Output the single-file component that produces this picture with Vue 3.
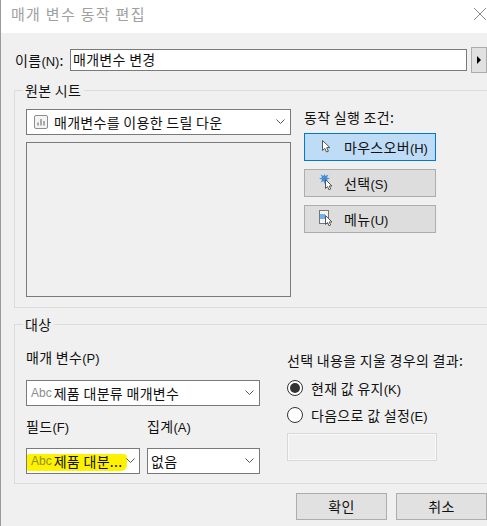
<template>
  <div class="dialog">
    <header class="titlebar">
      <span class="title">매개 변수 동작 편집</span>
      <svg class="close" width="14" height="14" viewBox="0 0 14 14">
        <path d="M1 1 13 13M13 1 1 13" stroke="#8a8a8a" stroke-width="1" fill="none" />
      </svg>
    </header>

    <main class="body">
      <div class="name-row">
        <label class="name-label">이름<span class="mn">(N)</span>:</label>
        <div class="name-input">매개변수 변경</div>
        <button class="arrow-btn"><span class="tri"></span></button>
      </div>

      <fieldset class="group source">
        <legend>원본 시트</legend>
        <div class="source-cols">
          <div class="source-left">
            <div class="combo">
              <svg class="sheet-icon" width="14" height="14" viewBox="0 0 14 14">
                <rect x="0.5" y="0.5" width="13" height="13" rx="1.5" fill="#f4f4f4" stroke="#8c8c8c" />
                <path d="M4 7.5v3M7 4v6.5M10 6v4.5" stroke="#777" stroke-width="1.2" fill="none" />
              </svg>
              <span class="combo-text">매개변수를 이용한 드릴 다운</span>
              <svg class="chev" width="9" height="6" viewBox="0 0 9 6"><path d="M.5.5 4.5 4.500 8.500.5" /></svg>
            </div>
            <div class="sheet-list"></div>
          </div>
          <div class="source-right">
            <div class="run-label">동작 실행 조건:</div>
            <button
              v-for="t in triggers"
              :key="t.label"
              class="trigger"
              :class="{ active: t.active }"
            >
              <svg class="trigger-icon" width="18" height="18" viewBox="0 0 18 18">
                <polygon
                  v-if="t.kind === 'select'"
                  points="5.500,0 6.500,2.100 9.400,.6 7.900,3.500 11,4.500 7.900,5.500 9.400,8.400 6.500,6.900 5.500,10 4.500,6.900 1.600,8.400 3.100,5.500 0,4.500 3.100,3.500 1.600,.6 4.500,2.100"
                  fill="#3f8fe0"
                />
                <g v-if="t.kind === 'menu'">
                  <rect x="0.5" y="0.5" width="9" height="13" fill="#f4f4f4" stroke="#777" />
                  <rect x="1" y="4" width="5" height="5" fill="#6db2ee" />
                </g>
                <path
                  :d="t.kind === 'hover'
                    ? 'M3.500 2.500v10l2.300-2.200 1.700 3.700 1.900-.8-1.700-3.600h3.200z'
                    : 'M6.500 5.500v9l2-2 1.500 3.300 1.700-.8-1.500-3h2.800z'"
                  fill="#fff"
                  stroke="#555"
                  stroke-width="1"
                  stroke-linejoin="round"
                />
              </svg>
              <span class="trigger-text">{{ t.label }}<span class="mn">({{ t.key }})</span></span>
            </button>
          </div>
        </div>
      </fieldset>

      <fieldset class="group target">
        <legend>대상</legend>
        <div class="target-cols">
          <div class="target-left">
            <div class="field-label first">매개 변수<span class="mn">(P)</span></div>
            <div class="combo">
              <span class="abc">Abc</span>
              <span class="combo-text">제품 대분류 매개변수</span>
              <svg class="chev" width="9" height="6" viewBox="0 0 9 6"><path d="M.5.5 4.5 4.500 8.500.5" /></svg>
            </div>
            <div class="two">
              <div class="col-field">
                <div class="field-label">필드<span class="mn">(F)</span></div>
                <div class="combo">
                  <span class="marker"></span>
                  <span class="abc">Abc</span>
                  <span class="combo-text">제품 대분...</span>
                  <svg class="chev" width="9" height="6" viewBox="0 0 9 6"><path d="M.5.5 4.5 4.500 8.500.5" /></svg>
                </div>
              </div>
              <div class="col-agg">
                <div class="field-label">집계<span class="mn">(A)</span></div>
                <div class="combo plain">
                  <span class="combo-text">없음</span>
                  <svg class="chev" width="9" height="6" viewBox="0 0 9 6"><path d="M.5.5 4.5 4.500 8.500.5" /></svg>
                </div>
              </div>
            </div>
          </div>
          <div class="target-right">
            <div class="clear-label">선택 내용을 지울 경우의 결과:</div>
            <div class="radio-row">
              <span class="radio on"></span>
              <span>현재 값 유지<span class="mn">(K)</span></span>
            </div>
            <div class="radio-row">
              <span class="radio"></span>
              <span>다음으로 값 설정<span class="mn">(E)</span></span>
            </div>
            <div class="value-box"></div>
          </div>
        </div>
      </fieldset>

      <footer class="footer">
        <button class="foot-btn">확인</button>
        <button class="foot-btn">취소</button>
      </footer>
    </main>
  </div>
</template>

<script setup>
const triggers = [
  { label: '마우스오버', key: 'H', kind: 'hover', active: true },
  { label: '선택', key: 'S', kind: 'select', active: false },
  { label: '메뉴', key: 'U', kind: 'menu', active: false },
]
</script>

<style>
html,
body {
  margin: 0;
  background: #f0f0f0;
}
</style>

<style scoped>
.dialog {
  width: 487px;
  height: 526px;
  overflow: hidden;
  box-sizing: border-box;
  border-left: 1px solid #9a9a9a;
  font-family: "Noto Sans CJK KR", "Liberation Sans", sans-serif;
  font-size: 14px;
  letter-spacing: 0.3px;
  color: #111;
  background: #f0f0f0;
}
.titlebar {
  height: 33px;
  box-sizing: border-box;
  padding: 0 0 6px 10px;
  background: #fff;
  display: flex;
  align-items: center;
  justify-content: space-between;
}
.title {
  font-size: 15px;
  letter-spacing: 1.3px;
  color: #a0a0a0;
}
.close {
  margin-right: 0;
}
.body {
  display: flex;
  flex-direction: column;
}
.mn {
  font-family: "Liberation Sans", sans-serif;
  font-size: 13px;
  letter-spacing: 0;
}
.name-row {
  display: flex;
  align-items: center;
  height: 22px;
  margin-top: 16px;
  padding-left: 14px;
}
.name-label {
  width: 55px;
  white-space: nowrap;
}
.name-input {
  width: 397px;
  height: 22px;
  box-sizing: border-box;
  border: 1px solid #7a7a7a;
  background: #fff;
  padding-left: 2px;
  line-height: 19px;
}
.arrow-btn {
  width: 16px;
  height: 26px;
  margin-left: 4px;
  padding: 0;
  flex: none;
  border: 1px solid #adadad;
  background: #e1e1e1;
  display: flex;
  align-items: center;
  justify-content: center;
}
.tri {
  border-left: 4px solid #000;
  border-top: 4px solid transparent;
  border-bottom: 4px solid transparent;
}
.group {
  margin: 0 -4px 0 13px;
  padding: 0;
  border: 1px solid #dcdcdc;
  min-width: 0;
}
.group legend {
  margin-left: 8px;
  padding: 0 3px 0 2px;
  line-height: 17px;
}
.source {
  height: 226px;
  box-sizing: border-box;
  margin-top: 11px;
}
.source-cols {
  display: flex;
  padding: 10px 0 0 11px;
}
.source-left {
  width: 265px;
}
.source-right {
  margin-left: 13px;
  width: 132px;
}
.combo {
  position: relative;
  height: 26px;
  box-sizing: border-box;
  border: 1px solid #7a7a7a;
  background: #fff;
  display: flex;
  align-items: center;
  padding-left: 7px;
  gap: 4px;
}
.combo.plain {
  padding-left: 3px;
}
.combo-text {
  position: relative;
  white-space: nowrap;
  flex: 1;
}
.chev {
  position: relative;
  flex: none;
  margin-right: 5px;
  fill: none;
  stroke: #555;
}
.sheet-icon {
  flex: none;
  margin-right: 2px;
}
.sheet-list {
  height: 155px;
  box-sizing: border-box;
  margin-top: 7px;
  border: 1px solid #7a7a7a;
  background: #f0f0f0;
}
.run-label {
  height: 24px;
  line-height: 17px;
}
.trigger {
  display: flex;
  align-items: center;
  width: 132px;
  height: 28px;
  margin-bottom: 8px;
  padding: 0 0 0 14px;
  border: 1px solid #adadad;
  background: #dddddd;
  font: inherit;
  letter-spacing: inherit;
  color: inherit;
  white-space: nowrap;
}
.trigger.active {
  border-color: #0078d7;
  background: #bedcf6;
}
.trigger-icon {
  flex: none;
  margin-right: 7px;
}
.target {
  height: 168px;
  box-sizing: border-box;
  margin-top: 8px;
}
.target-cols {
  display: flex;
  padding: 0 0 0 11px;
}
.target-left {
  width: 234px;
}
.target-right {
  margin-left: 27px;
  padding-top: 19px;
}
.field-label {
  height: 30px;
  line-height: 17px;
}
.field-label.first {
  margin-top: 16px;
  height: 31px;
}
.two {
  display: flex;
  gap: 7px;
  margin-top: 12px;
}
.col-field {
  width: 114px;
}
.col-agg {
  width: 113px;
}
.abc {
  position: relative;
  font-family: "Liberation Sans", sans-serif;
  font-size: 12px;
  letter-spacing: 0;
  color: #8c8c8c;
  flex: none;
  margin: 0 -2px 0 -3px;
}
.marker {
  position: absolute;
  left: 0;
  top: 5px;
  width: 100px;
  height: 17px;
  background: #fff200;
  border-radius: 2px 4px 6px 2px;
}
.marker + .abc {
  color: #8e9020;
}
.clear-label {
  height: 22px;
  line-height: 17px;
  white-space: nowrap;
}
.radio-row {
  display: flex;
  align-items: center;
  gap: 8px;
  height: 27px;
  white-space: nowrap;
}
.radio {
  width: 14px;
  height: 14px;
  border: 1px solid #333;
  border-radius: 50%;
  background: #fff;
  flex: none;
  position: relative;
}
.radio.on::after {
  content: "";
  position: absolute;
  inset: 2px;
  border-radius: 50%;
  background: #333;
}
.value-box {
  width: 150px;
  height: 28px;
  box-sizing: border-box;
  margin-top: 5px;
  border: 1px solid #d8d8d8;
  outline: 1px solid #f8f8f8;
  outline-offset: -2px;
}
.footer {
  display: flex;
  justify-content: flex-end;
  gap: 9px;
  margin-top: 9px;
}
.foot-btn {
  width: 91px;
  height: 27px;
  padding: 0 0 1px;
  border: 1px solid #adadad;
  background: #e1e1e1;
  font: inherit;
  letter-spacing: inherit;
  color: inherit;
}
</style>
